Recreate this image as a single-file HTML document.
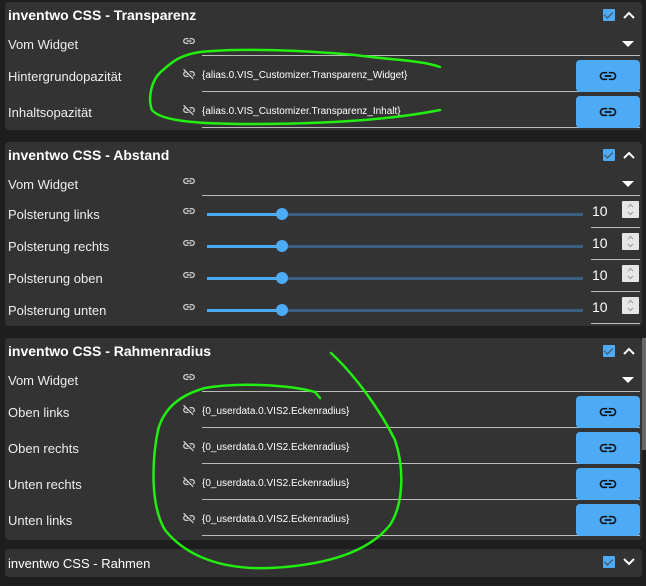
<!DOCTYPE html>
<html><head><meta charset="utf-8"><style>
*{margin:0;padding:0;box-sizing:border-box}
body{width:646px;height:586px;background:#1e1e1e;position:relative;overflow:hidden;font-family:"Liberation Sans",sans-serif;color:#fff}
.p{position:absolute;left:5px;width:637px;background:#333;border-radius:4px}
.h{position:absolute;left:8px;font-size:14px;font-weight:bold;color:#fff}
.l{position:absolute;left:8px;font-size:13px;color:#eee}
.u{position:absolute;left:202px;right:6px;height:1px;background:#bbb}
.cb{position:absolute;left:603px;width:12px;height:12px;background:#4dabf5;border-radius:1px}
.cb:after{content:"";position:absolute;left:3px;top:1px;width:4px;height:7px;border:solid #444;border-width:0 1.5px 1.5px 0;transform:rotate(45deg)}
.ic{position:absolute;left:182px}
.tx{position:absolute;left:202px;font-size:10px;color:#fff}
.btn{position:absolute;left:576px;width:64px;height:32px;background:#4dabf5;border-radius:4px}
.btn svg{position:absolute;left:21px;top:6px}
.tr{position:absolute;left:207px;width:376px;height:3px;background:#3a5f80}
.ta{position:absolute;left:207px;width:75px;height:3px;background:#4dabf5}
.th{position:absolute;left:276px;width:12px;height:12px;border-radius:50%;background:#4dabf5}
.n{position:absolute;left:592px;font-size:14px;color:#fff}
.sp{position:absolute;left:622px;width:17px;height:17px;background:#e6e6e6;border-radius:1px}
.nu{position:absolute;left:591px;width:49px;height:1px;background:#bbb}
</style></head><body>
<svg width="0" height="0" style="position:absolute"><defs>
<symbol id="lk" viewBox="0 0 24 24"><path d="M3.9 12c0-1.7 1.4-3.1 3.1-3.1h4V7H7c-2.8 0-5 2.2-5 5s2.2 5 5 5h4v-1.9H7c-1.7 0-3.1-1.4-3.1-3.1zM8 13h8v-2H8v2zm9-6h-4v1.9h4c1.7 0 3.1 1.4 3.1 3.1s-1.4 3.1-3.1 3.1h-4V17h4c2.8 0 5-2.2 5-5s-2.2-5-5-5z"/></symbol>
<symbol id="ul" viewBox="0 0 24 24"><path d="M17 7h-4v1.9h4c1.7 0 3.1 1.4 3.1 3.1 0 1.4-.9 2.6-2.2 3l1.4 1.4C21 15.7 22 14 22 12c0-2.8-2.2-5-5-5zm-1 4h-2.2l2 2H16zM2 4.3l3.1 3.1C3.3 8.1 2 9.9 2 12c0 2.8 2.2 5 5 5h4v-1.9H7c-1.7 0-3.1-1.4-3.1-3.1 0-1.6 1.2-2.9 2.8-3.1L8.7 11H8v2h2.7l2.3 2.3V17h1.7l4 4 1.3-1.3L3.3 3 2 4.3z"/></symbol>
<symbol id="spn" viewBox="0 0 17 17"><path d="M6 6l2.5-2.5L11 6M6 11l2.5 2.5L11 11" stroke="#999" stroke-width="1" fill="none"/></symbol>
</defs></svg>

<!-- Panel 1 -->
<div class="p" style="top:2px;height:128px"></div>
<div class="h" style="top:7px">inventwo CSS - Transparenz</div>
<div class="cb" style="top:9px"></div>
<svg style="position:absolute;left:622px;top:9px" width="14" height="12"><path d="M2 9l5-5 5 5" stroke="#fff" stroke-width="2" fill="none"/></svg>
<div class="l" style="top:37px">Vom Widget</div>
<svg class="ic" style="top:34px" width="14" height="14" fill="#ddd"><use href="#lk"/></svg>
<svg style="position:absolute;left:622px;top:41px" width="12" height="6"><path d="M0 0h12L6 6z" fill="#fff"/></svg>
<div class="u" style="top:55px"></div>
<div class="l" style="top:69px">Hintergrundopazität</div>
<svg class="ic" style="top:67px" width="14" height="14" fill="#ddd"><use href="#ul"/></svg>
<div class="tx" style="top:70px">{alias.0.VIS_Customizer.Transparenz_Widget}</div>
<div class="u" style="top:91px"></div>
<div class="btn" style="top:60px"><svg width="22" height="20" fill="#111"><use href="#lk"/></svg></div>
<div class="l" style="top:105px">Inhaltsopazität</div>
<svg class="ic" style="top:103px" width="14" height="14" fill="#ddd"><use href="#ul"/></svg>
<div class="tx" style="top:106px">{alias.0.VIS_Customizer.Transparenz_Inhalt}</div>
<div class="u" style="top:127px"></div>
<div class="btn" style="top:96px"><svg width="22" height="20" fill="#111"><use href="#lk"/></svg></div>

<!-- Panel 2 -->
<div class="p" style="top:142px;height:184px"></div>
<div class="h" style="top:147px">inventwo CSS - Abstand</div>
<div class="cb" style="top:149px"></div>
<svg style="position:absolute;left:622px;top:149px" width="14" height="12"><path d="M2 9l5-5 5 5" stroke="#fff" stroke-width="2" fill="none"/></svg>
<div class="l" style="top:177px">Vom Widget</div>
<svg class="ic" style="top:174px" width="14" height="14" fill="#ddd"><use href="#lk"/></svg>
<svg style="position:absolute;left:622px;top:181px" width="12" height="6"><path d="M0 0h12L6 6z" fill="#fff"/></svg>
<div class="u" style="top:195px"></div>

<div class="l" style="top:207px">Polsterung links</div>
<svg class="ic" style="top:204px" width="14" height="14" fill="#ddd"><use href="#lk"/></svg>
<div class="tr" style="top:213px"></div><div class="ta" style="top:213px"></div><div class="th" style="top:208px"></div>
<div class="n" style="top:203px">10</div><svg class="sp" style="top:201px" width="17" height="17"><use href="#spn"/></svg><div class="nu" style="top:227px"></div>

<div class="l" style="top:239px">Polsterung rechts</div>
<svg class="ic" style="top:236px" width="14" height="14" fill="#ddd"><use href="#lk"/></svg>
<div class="tr" style="top:245px"></div><div class="ta" style="top:245px"></div><div class="th" style="top:240px"></div>
<div class="n" style="top:235px">10</div><svg class="sp" style="top:233px" width="17" height="17"><use href="#spn"/></svg><div class="nu" style="top:259px"></div>

<div class="l" style="top:271px">Polsterung oben</div>
<svg class="ic" style="top:268px" width="14" height="14" fill="#ddd"><use href="#lk"/></svg>
<div class="tr" style="top:277px"></div><div class="ta" style="top:277px"></div><div class="th" style="top:272px"></div>
<div class="n" style="top:267px">10</div><svg class="sp" style="top:265px" width="17" height="17"><use href="#spn"/></svg><div class="nu" style="top:291px"></div>

<div class="l" style="top:303px">Polsterung unten</div>
<svg class="ic" style="top:300px" width="14" height="14" fill="#ddd"><use href="#lk"/></svg>
<div class="tr" style="top:309px"></div><div class="ta" style="top:309px"></div><div class="th" style="top:304px"></div>
<div class="n" style="top:299px">10</div><svg class="sp" style="top:297px" width="17" height="17"><use href="#spn"/></svg><div class="nu" style="top:323px"></div>

<!-- Panel 3 -->
<div class="p" style="top:338px;height:202px"></div>
<div style="position:absolute;left:642px;top:338px;width:4px;height:112px;background:#666"></div>
<div class="h" style="top:343px">inventwo CSS - Rahmenradius</div>
<div class="cb" style="top:345px"></div>
<svg style="position:absolute;left:622px;top:345px" width="14" height="12"><path d="M2 9l5-5 5 5" stroke="#fff" stroke-width="2" fill="none"/></svg>
<div class="l" style="top:373px">Vom Widget</div>
<svg class="ic" style="top:370px" width="14" height="14" fill="#ddd"><use href="#lk"/></svg>
<svg style="position:absolute;left:622px;top:377px" width="12" height="6"><path d="M0 0h12L6 6z" fill="#fff"/></svg>
<div class="u" style="top:391px"></div>

<div class="l" style="top:405px">Oben links</div>
<svg class="ic" style="top:403px" width="14" height="14" fill="#ddd"><use href="#ul"/></svg>
<div class="tx" style="top:406px">{0_userdata.0.VIS2.Eckenradius}</div>
<div class="u" style="top:427px"></div>
<div class="btn" style="top:396px"><svg width="22" height="20" fill="#111"><use href="#lk"/></svg></div>

<div class="l" style="top:441px">Oben rechts</div>
<svg class="ic" style="top:439px" width="14" height="14" fill="#ddd"><use href="#ul"/></svg>
<div class="tx" style="top:442px">{0_userdata.0.VIS2.Eckenradius}</div>
<div class="u" style="top:463px"></div>
<div class="btn" style="top:432px"><svg width="22" height="20" fill="#111"><use href="#lk"/></svg></div>

<div class="l" style="top:477px">Unten rechts</div>
<svg class="ic" style="top:475px" width="14" height="14" fill="#ddd"><use href="#ul"/></svg>
<div class="tx" style="top:478px">{0_userdata.0.VIS2.Eckenradius}</div>
<div class="u" style="top:499px"></div>
<div class="btn" style="top:468px"><svg width="22" height="20" fill="#111"><use href="#lk"/></svg></div>

<div class="l" style="top:513px">Unten links</div>
<svg class="ic" style="top:511px" width="14" height="14" fill="#ddd"><use href="#ul"/></svg>
<div class="tx" style="top:514px">{0_userdata.0.VIS2.Eckenradius}</div>
<div class="u" style="top:535px"></div>
<div class="btn" style="top:504px"><svg width="22" height="20" fill="#111"><use href="#lk"/></svg></div>

<!-- Panel 4 -->
<div class="p" style="top:549px;height:28px"></div>
<div class="h" style="top:556px;font-weight:normal;font-size:13px">inventwo CSS - Rahmen</div>
<div class="cb" style="top:556px"></div>
<svg style="position:absolute;left:622px;top:556px" width="14" height="12"><path d="M2 3l5 5 5-5" stroke="#fff" stroke-width="2" fill="none"/></svg>

<!-- green annotations -->
<svg style="position:absolute;left:0;top:0" width="646" height="586" fill="none" stroke="#22ee11" stroke-width="2.5" stroke-linecap="round">
<path d="M440 67C420 60 390 60 355 55C300 50 240 48 200 52C180 55 172 62 163 70C150 80 148 100 152 110C160 120 190 124 250 124C320 124 390 120 440 110"/>
<path d="M331 353C355 375 380 410 395 440C405 470 403 505 390 525C370 550 330 565 270 568C220 570 185 555 165 530C150 505 152 460 158 430C164 408 180 395 205 388C240 382 290 385 315 392L320 398"/>
</svg>
</body></html>
